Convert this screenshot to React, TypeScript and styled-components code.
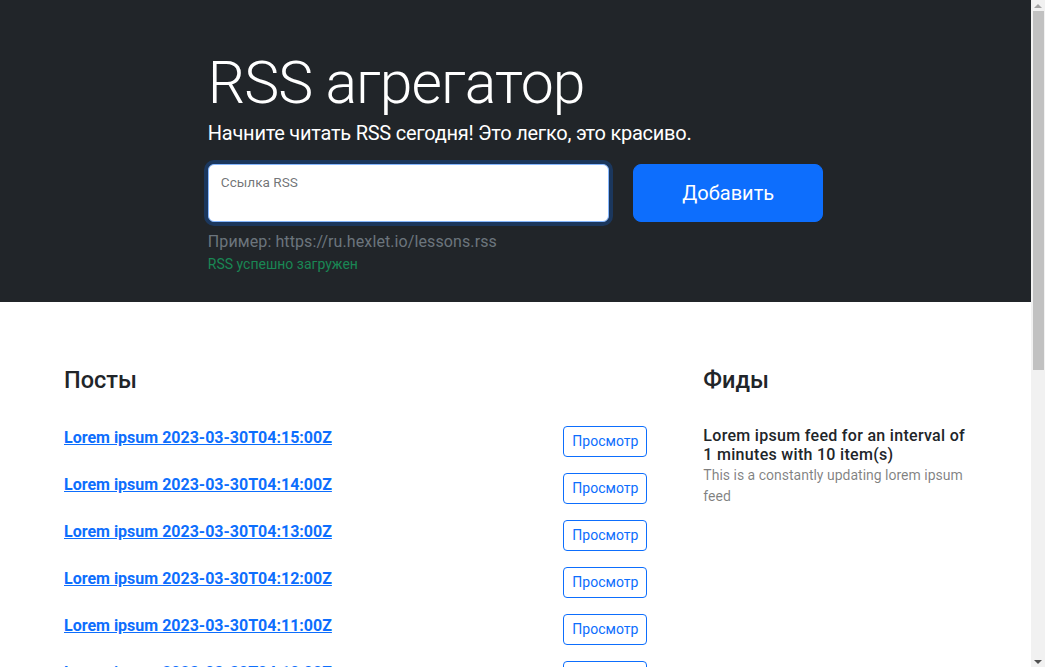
import React from "react";
import styled, { createGlobalStyle } from "styled-components";

const GlobalStyle = createGlobalStyle`
  *, *::before, *::after { box-sizing: border-box; }
  html, body { margin: 0; padding: 0; overflow: hidden; }
  body {
    font-family: Roboto, "Noto Sans", sans-serif;
    font-size: 16px;
    line-height: 1.5;
    color: #212529;
    background: #fff;
  }
`;

const Page = styled.div`
  display: flex;
  height: 100vh;
  overflow: hidden;
`;

const Viewport = styled.div`
  flex: 1;
  min-width: 0;
  overflow: hidden;
`;

/* window scrollbar, drawn as in the screenshot */
const ScrollBar = styled.div`
  flex: none;
  width: 14px;
  display: flex;
  flex-direction: column;
  background: #f1f1f1;
`;

const ScrollArrow = styled.div`
  flex: none;
  height: 11px;
  display: flex;
  align-items: center;
  justify-content: center;
`;

const ScrollTrack = styled.div`
  flex: 1;
  display: flex;
  flex-direction: column;
  padding: 0 1px 0 2px;
`;

const ScrollThumb = styled.div`
  height: 359px;
  background: #c1c1c1;
`;

const Hero = styled.section`
  background: #212529;
  padding: 48px 48px 27px;
`;

const Row = styled.div`
  display: flex;
  margin: 0 -12px;
`;

const HeroRow = styled(Row)`
  justify-content: center;
`;

const HeroCol = styled.div`
  width: 66.6667%;
  padding: 0 12px;
  color: #fff;
`;

const Title = styled.h1`
  margin: 0;
  font-size: 58.9px;
  font-weight: 300;
  line-height: 70px;
  letter-spacing: -1px;
  color: #fff;
`;

const Lead = styled.p`
  margin: 0 0 16px;
  font-size: 20px;
  line-height: 30px;
  font-weight: 400;
  letter-spacing: -0.25px;
`;

const FormRow = styled.form`
  display: flex;
  gap: 24px;
  align-items: stretch;
`;

const Floating = styled.div`
  position: relative;
  flex: 1;
`;

const Input = styled.input`
  display: block;
  width: 100%;
  height: 58px;
  padding: 26px 12px 10px;
  font-family: inherit;
  font-size: 16px;
  color: #212529;
  background: #fff;
  border: 1px solid #86b7fe;
  border-radius: 6px;
  outline: none;
  box-shadow: 0 0 0 4px rgba(13, 110, 253, 0.25);
`;

const FloatLabel = styled.label`
  position: absolute;
  top: 8px;
  left: 13px;
  font-size: 13.6px;
  line-height: 20px;
  color: rgba(33, 37, 41, 0.65);
  pointer-events: none;
`;

const AddButton = styled.button`
  flex: none;
  padding: 8px 48px;
  font-family: inherit;
  font-size: 20px;
  line-height: 1.5;
  color: #fff;
  background: #0d6efd;
  border: 1px solid #0d6efd;
  border-radius: 8px;
  cursor: pointer;
`;

const Hint = styled.p`
  margin: 8px 0 0;
  color: #6c757d;
  letter-spacing: 0.1px;
`;

const Feedback = styled.p`
  margin: 0;
  font-size: 14px;
  line-height: 21px;
  color: #198754;
`;

const Main = styled.section`
  padding: 48px;
`;

const Col = styled.div<{ $w: number }>`
  width: ${(p) => p.$w}%;
  padding: 0 12px;
`;

const Card = styled.div`
  display: flex;
  flex-direction: column;
`;

const CardBody = styled.div`
  padding: 16px;
`;

const CardTitle = styled.h2`
  margin: 0 0 8px;
  font-size: 23.5px;
  font-weight: 500;
  line-height: 1.2;
`;

const List = styled.ul`
  list-style: none;
  margin: 0;
  padding: 0;
`;

const PostItem = styled.li`
  display: flex;
  justify-content: space-between;
  align-items: flex-start;
  padding: 8px 16px;
`;

const PostLink = styled.a`
  font-weight: 700;
  color: #0d6efd;
  text-decoration: underline;
`;

const ViewButton = styled.button`
  flex: none;
  padding: 4px 8px;
  font-family: inherit;
  font-size: 14px;
  line-height: 1.5;
  color: #0d6efd;
  background: transparent;
  border: 1px solid #0d6efd;
  border-radius: 4px;
  cursor: pointer;
`;

const FeedItem = styled.li`
  padding: 8px 16px;
`;

const FeedTitle = styled.h3`
  margin: 0;
  font-size: 16px;
  font-weight: 500;
  line-height: 1.2;
  letter-spacing: 0.3px;
`;

const FeedDesc = styled.p`
  margin: 0;
  font-size: 14px;
  line-height: 1.5;
  color: rgba(0, 0, 0, 0.5);
  letter-spacing: 0;
`;

const Triangle = ({ up, color }: { up?: boolean; color: string }) => (
  <svg width="8" height="4" viewBox="0 0 8 4">
    <path d={up ? "M0 4 L4 0 L8 4 Z" : "M0 0 L8 0 L4 4 Z"} fill={color} />
  </svg>
);

const posts = [15, 14, 13, 12, 11, 10, 9, 8, 7, 6].map(
  (m) => `Lorem ipsum 2023-03-30T04:${String(m).padStart(2, "0")}:00Z`
);

export default function App() {
  return (
    <Page>
      <GlobalStyle />
      <Viewport>
        <Hero>
          <HeroRow>
            <HeroCol>
              <Title>RSS агрегатор</Title>
              <Lead>Начните читать RSS сегодня! Это легко, это красиво.</Lead>
              <FormRow onSubmit={(e) => e.preventDefault()}>
                <Floating>
                  <Input id="url-input" aria-label="url" autoComplete="off" />
                  <FloatLabel htmlFor="url-input">Ссылка RSS</FloatLabel>
                </Floating>
                <AddButton type="submit">Добавить</AddButton>
              </FormRow>
              <Hint>Пример: https://ru.hexlet.io/lessons.rss</Hint>
              <Feedback>RSS успешно загружен</Feedback>
            </HeroCol>
          </HeroRow>
        </Hero>
        <Main>
          <Row>
            <Col $w={66.6667}>
              <Card>
                <CardBody>
                  <CardTitle>Посты</CardTitle>
                </CardBody>
                <List>
                  {posts.map((p) => (
                    <PostItem key={p}>
                      <PostLink href="#">{p}</PostLink>
                      <ViewButton type="button">Просмотр</ViewButton>
                    </PostItem>
                  ))}
                </List>
              </Card>
            </Col>
            <Col $w={33.3333}>
              <Card>
                <CardBody>
                  <CardTitle>Фиды</CardTitle>
                </CardBody>
                <List>
                  <FeedItem>
                    <FeedTitle>Lorem ipsum feed for an interval of 1 minutes with 10 item(s)</FeedTitle>
                    <FeedDesc>This is a constantly updating lorem ipsum feed</FeedDesc>
                  </FeedItem>
                </List>
              </Card>
            </Col>
          </Row>
        </Main>
      </Viewport>
      <ScrollBar aria-hidden="true">
        <ScrollArrow>
          <Triangle up color="#a3a3a3" />
        </ScrollArrow>
        <ScrollTrack>
          <ScrollThumb />
        </ScrollTrack>
        <ScrollArrow>
          <Triangle color="#505050" />
        </ScrollArrow>
      </ScrollBar>
    </Page>
  );
}
